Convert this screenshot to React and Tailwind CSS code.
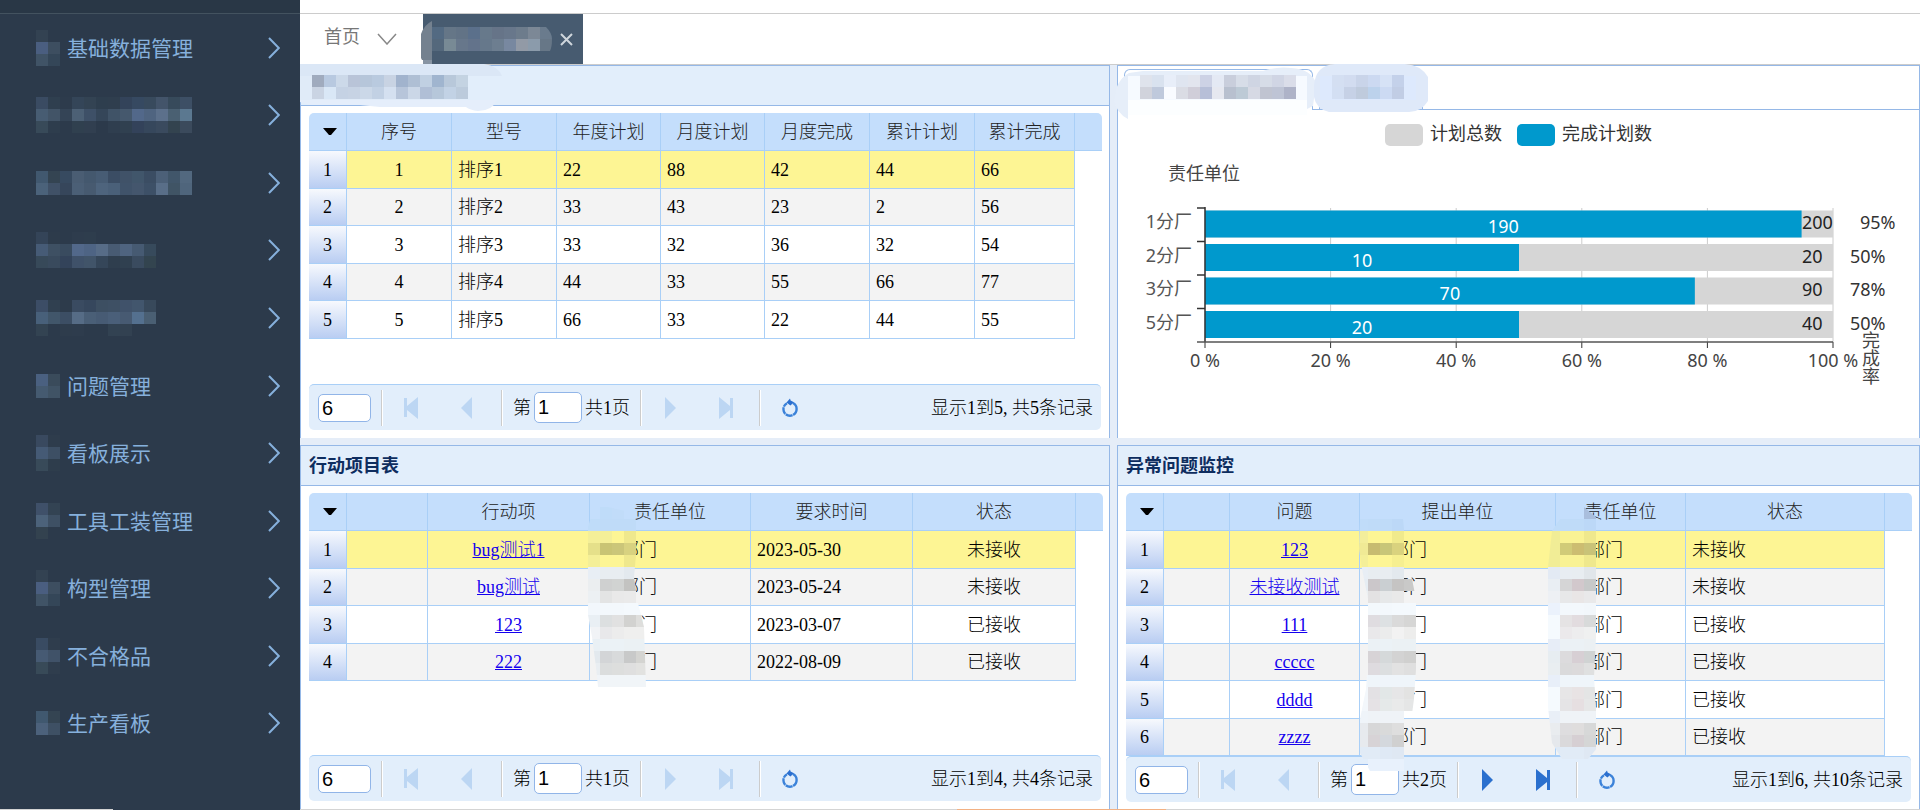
import { useState } from 'react';

const CELL = 12;

// Rows of hex colours separated by blanks, "-" leaves a cell empty
const Mosaic = ({ rows, className = '', clip, id }) => {
    const grid = rows.map((row) => row.split(' '));
    const width = Math.max(...grid.map((row) => row.length)) * CELL;
    const height = grid.length * CELL;

    return (
        <svg width={width} height={height} className={`shrink-0 ${className}`} shapeRendering="crispEdges" aria-hidden="true">
            {clip && (
                <clipPath id={id}>
                    <polygon points={clip} />
                </clipPath>
            )}
            <g clipPath={clip ? `url(#${id})` : undefined}>
                {grid.map((row, y) =>
                    row.map((color, x) =>
                        color === '-' ? null : (
                            <rect key={`${x}-${y}`} x={x * CELL} y={y * CELL} width={CELL} height={CELL} fill={`#${color}`} />
                        )
                    )
                )}
            </g>
        </svg>
    );
};

const menuItems = [
    { label: '基础数据管理', mosaic: ['334252 -', '4a5e80 3d4e60', '405366 344658'] },
    {
        name: '菜单二',
        mosaic: [
            '3a4b62 2f3f4f 2d3b4c 344558 334353 2e3e4e 2f3e4e 33435a 364961 384a5d 43546a 374a5b 3d4f65',
            '475c72 425467 344456 4c6075 3e5067 354659 405367 45586d 52688a 4f6480 5c708b 4a6072 5b7890',
            '384a59 2e3d4d - 30404f 313f50 - 2f3e4f 304050 33425a 36475c 3a4a5e 33434f 3b4a5c',
        ],
    },
    {
        name: '菜单三',
        mosaic: [
            '41586f 344452 374a60 4a5d73 44586e 475c74 3b4d64 405268 41566b 3b4d63 4c6078 41566a 52687f',
            '4b627a 405167 36465b 4b5f76 475a70 4e647d 4a6079 40536a 44566d 3d5067 596e88 405465 4f657c',
        ],
    },
    {
        name: '菜单四',
        mosaic: [
            '344458 2d3b4b - 2e3c4d 2e3d4d - - - - -',
            '465b76 3e5063 394b5f 52688a 4e6484 576c87 485b73 4f6480 465a72 374a5c',
            '374959 394a5d 33435a 3f5169 415469 354659 2f3e4e 304050 3a4b5f 33444f',
        ],
    },
    {
        name: '菜单五',
        mosaic: [
            '3c4d66 304050 2d3b4b 3a4b61 36475d 3d4f62 3e5064 40526a 42566d 38495b',
            '48607a 41566a 3c4e64 566c86 4a5f77 475b74 4a5f79 475a72 54708f 4a5f73',
            '334352 - 2e3c4c 2e3c4d - - 324252 324151 - -',
        ],
    },
    { label: '问题管理', mosaic: ['4a6080 3a4b5b', '455a70 405365'] },
    { label: '看板展示', mosaic: ['39495f 2e3c4c', '455a75 3d4f64', '384a59 2e3d4c'] },
    { label: '工具工装管理', mosaic: ['3f5069 334353', '4c627a 3e5064', '33424f -'] },
    { label: '构型管理', mosaic: ['334252 -', '4a5e80 3d4e60', '405366 344658'] },
    { label: '不合格品', mosaic: ['394b62 2f3d4d', '465a73 405268', '384a58 2f3d4d'] },
    { label: '生产看板', mosaic: ['40586f 344452', '4c617b 3e5064'] },
];

const Sidebar = () => (
    <aside className="w-[300px] shrink-0 flex flex-col bg-[#2c3a4b] text-[#86b0dc]">
        <div className="h-[14px] shrink-0 bg-[#293746] border-b border-[#43525f]"></div>
        <nav className="flex-1 flex flex-col pb-[52px] font-['Noto_Sans_CJK_SC',sans-serif]">
            {menuItems.map((item) => (
                <button
                    key={item.label || item.name}
                    type="button"
                    aria-label={item.name}
                    className="flex-1 min-h-0 flex items-center pl-9 pr-5 gap-[7px] text-[21px] text-left"
                >
                    <Mosaic rows={item.mosaic} />
                    <span className="flex-1">{item.label}</span>
                    <svg width="12" height="22" viewBox="0 0 12 22" fill="none" stroke="currentColor" strokeWidth="2">
                        <path d="M1 1 L10.8 11 L1 21" />
                    </svg>
                </button>
            ))}
        </nav>
    </aside>
);

const TabBar = () => (
    <div className="h-[51px] shrink-0 flex border-b border-[#cccccc]">
        <button type="button" className="w-[123px] flex items-center pb-2 pl-6 gap-[17px] text-lg text-[#777777] font-['Noto_Sans_CJK_SC',sans-serif] font-normal">
            首页
            <svg width="20" height="12" viewBox="0 0 20 12" fill="none" stroke="#888888" strokeWidth="1.5" className="mt-2">
                <path d="M1 1 L10 11 L19 1" />
            </svg>
        </button>
        <div className="relative w-40 flex items-center bg-[#475b70]">
            {/* Brush mark hanging over the tab's left edge */}
            <svg width="14" height="58" viewBox="0 0 14 58" className="absolute -left-[3px] top-0" aria-hidden="true">
                <path d="M12 7 Q4 11 1 20 V44 L2 46 H12 Z" fill="#74818f" />
                <path d="M3 46 H12 V58 H3 Z" fill="#8794a3" />
            </svg>
            <svg width="120" height="24" className="ml-[9px]" shapeRendering="crispEdges" aria-hidden="true">
                <clipPath id="tab-title">
                    <path d="M0 0 H114 Q120 6 120 12 Q120 20 118 24 H0 Z" />
                </clipPath>
                <g clipPath="url(#tab-title)">
                    {[
                        ['536a82', '657687', '627386', '5b708b', '67798b', '667488', '68778b', '6d7c8c', '7c8896', '6a7b8d'],
                        ['54687c', '788a95', '67778b', '63738b', '66788b', '6d7e90', '7888a0', '929aa6', '8b9bab', '677787'],
                    ].map((row, y) => row.map((c, x) => <rect key={`${x}-${y}`} x={x * 12} y={y * 12} width="12" height="12" fill={`#${c}`} />))}
                </g>
            </svg>
            <button type="button" aria-label="关闭" className="ml-2 mt-px">
                <svg width="13" height="13" viewBox="0 0 13 13" stroke="#cfd6dc" strokeWidth="2">
                    <path d="M1 1 L12 12 M12 1 L1 12" />
                </svg>
            </button>
        </div>
    </div>
);

const PageIcon = ({ type }) => (
    <svg width="18" height="22" viewBox="0 0 18 22" fill="currentColor">
        {type === 'first' && <path d="M2 1 H5 V9 L16 0 V22 L5 13 V20 H2 Z" />}
        {type === 'prev' && <path d="M14 0 V22 L3 11 Z" />}
        {type === 'next' && <path d="M4 0 V22 L15 11 Z" />}
        {type === 'last' && <path d="M2 0 L13 9 V1 H16 V21 H13 V13 L2 22 Z" />}
    </svg>
);

const RefreshIcon = () => (
    <svg width="18" height="20" viewBox="0 0 18 20" fill="none" stroke="#3b82d9" strokeWidth="2.4">
        <path d="M12 5 A6.6 6.6 0 0 1 15.6 11" />
        <path d="M15.6 11 A6.6 6.6 0 1 1 6 5.2" strokeDasharray="7 0.6" />
        <path d="M5.5 4.6 L9 0.6 L9.6 2.6 L13 4.2 L9.4 7.6 Z" fill="#2b6fcf" stroke="none" />
    </svg>
);

const Separator = () => <div className="w-[2px] h-9 border-l border-r border-l-[#cccccc] border-r-white"></div>;

const PageButton = ({ type, label, active }) => (
    <button
        type="button"
        aria-label={label}
        disabled={!active}
        className={`w-14 flex justify-center ${active ? 'text-[#2b70ce]' : 'text-[#bcd6f3]'}`}
    >
        <PageIcon type={type} />
    </button>
);

const Pager = ({ pages, summary, hasNext }) => {
    const [size, setSize] = useState('6');
    const [page, setPage] = useState('1');

    return (
        <div className="mt-auto h-[46px] shrink-0 flex items-center pl-[9px] pr-2 rounded-[5px] bg-[#e2eefb] border-t border-[#a9cff7]">
            <input
                aria-label="每页条数"
                value={size}
                onChange={(e) => setSize(e.target.value)}
                className="w-[53px] h-7 mr-[10px] pl-[3px] bg-white border border-[#91b5e8] rounded-[5px] text-xl font-['Liberation_Sans',sans-serif]"
            />
            <Separator />
            <PageButton type="first" label="首页" />
            <PageButton type="prev" label="上一页" />
            <div className="w-[6px]"></div>
            <Separator />
            <label className="flex items-center ml-[10px] mr-[10px] gap-[3px]">
                第
                <input
                    value={page}
                    onChange={(e) => setPage(e.target.value)}
                    className="w-12 h-[31px] pl-[3px] bg-white border border-[#91b5e8] rounded-[5px] text-xl font-['Liberation_Sans',sans-serif]"
                />
                共{pages}页
            </label>
            <Separator />
            <PageButton type="next" label="下一页" active={hasNext} />
            <PageButton type="last" label="末页" active={hasNext} />
            <div className="w-[5px]"></div>
            <Separator />
            <button type="button" aria-label="刷新" className="ml-5">
                <RefreshIcon />
            </button>
            <span className="ml-auto whitespace-pre">{summary}</span>
        </div>
    );
};

const DataGrid = ({ columns, rows }) => (
    <table className="w-full table-fixed border-separate border-spacing-0">
        <colgroup>
            <col style={{ width: 38 }} />
            {columns.map((col) => (
                <col key={col.key} style={{ width: col.width }} />
            ))}
            <col style={{ width: 27 }} />
        </colgroup>
        <thead>
            <tr className="h-[38px]">
                <th className="py-0 pr-0 pl-1 bg-[#c4defc] border-b border-r border-[#a9cff7] rounded-tl-[5px]">
                    <svg width="14" height="8" viewBox="0 0 14 8" className="mx-auto" role="img" aria-label="菜单">
                        <path d="M0 0 H14 L8 7 H6 Z" fill="#000" />
                    </svg>
                </th>
                {columns.map((col) => (
                    <th key={col.key} className="p-0 font-light text-[#222222] bg-[#c4defc] border-b border-r border-[#a9cff7]">
                        {col.title}
                    </th>
                ))}
                <th className="bg-[#c4defc] border-b border-[#a9cff7] rounded-tr-[5px]"></th>
            </tr>
        </thead>
        <tbody>
            {rows.map((row, i) => (
                <tr key={i} className={`odd:h-[38px] even:h-[37px] ${i === 0 ? 'bg-[#fdf594]' : 'odd:bg-white even:bg-[#f3f3f3]'}`}>
                    <td className="p-0 text-center bg-linear-to-b from-[#f7f9fd] to-[#b9cdf2] border-b border-r border-[#a9cff7]">{i + 1}</td>
                    {columns.map((col) => (
                        <td
                            key={col.key}
                            className={`p-0 border-b border-r border-[#a9cff7] ${col.center ? 'text-center' : col.masked ? 'pl-[31px]' : 'pl-[6px]'}`}
                        >
                            {col.link ? (
                                <a href="#" className="text-[#1400ee] underline">
                                    {row[col.key]}
                                </a>
                            ) : (
                                row[col.key]
                            )}
                        </td>
                    ))}
                    <td className="bg-white"></td>
                </tr>
            ))}
        </tbody>
    </table>
);

const Panel = ({ header, children }) => (
    <section className="relative min-w-0 min-h-0 flex flex-col bg-white border-l border-r border-[#95b8e7]">
        <h2 className="h-[41px] shrink-0 flex items-center pl-2 bg-[#e2eefb] border-t border-b border-[#95b8e7] text-lg font-bold text-[#0e2d5f]">
            {header}
        </h2>
        <div className="relative flex-1 min-h-0 flex flex-col px-2 pt-[7px] pb-2">{children}</div>
    </section>
);

const planColumns = [
    { key: 'no', title: '序号', width: 105, center: true },
    { key: 'model', title: '型号', width: 105 },
    { key: 'year', title: '年度计划', width: 104 },
    { key: 'month', title: '月度计划', width: 104 },
    { key: 'monthDone', title: '月度完成', width: 105 },
    { key: 'total', title: '累计计划', width: 105 },
    { key: 'totalDone', title: '累计完成', width: 100 },
];

const planRows = [
    { no: 1, model: '排序1', year: 22, month: 88, monthDone: 42, total: 44, totalDone: 66 },
    { no: 2, model: '排序2', year: 33, month: 43, monthDone: 23, total: 2, totalDone: 56 },
    { no: 3, model: '排序3', year: 33, month: 32, monthDone: 36, total: 32, totalDone: 54 },
    { no: 4, model: '排序4', year: 44, month: 33, monthDone: 55, total: 66, totalDone: 77 },
    { no: 5, model: '排序5', year: 66, month: 33, monthDone: 22, total: 44, totalDone: 55 },
];

const actionColumns = [
    { key: 'blank', title: '', width: 81 },
    { key: 'name', title: '行动项', width: 162, center: true, link: true },
    { key: 'dept', title: '责任单位', width: 161, masked: true },
    { key: 'date', title: '要求时间', width: 162 },
    { key: 'status', title: '状态', width: 163, center: true },
];

const actionRows = [
    { name: 'bug测试1', dept: '部门', date: '2023-05-30', status: '未接收' },
    { name: 'bug测试', dept: '部门', date: '2023-05-24', status: '未接收' },
    { name: '123', dept: '部门', date: '2023-03-07', status: '已接收' },
    { name: '222', dept: '部门', date: '2022-08-09', status: '已接收' },
];

const issueColumns = [
    { key: 'blank', title: '', width: 66 },
    { key: 'name', title: '问题', width: 130, center: true, link: true },
    { key: 'from', title: '提出单位', width: 196, masked: true },
    { key: 'dept', title: '责任单位', width: 130, masked: true },
    { key: 'status', title: '状态', width: 199 },
];

const issueRows = [
    { name: '123', from: '部门', dept: '部门', status: '未接收' },
    { name: '未接收测试', from: '部门', dept: '部门', status: '未接收' },
    { name: '111', from: '部门', dept: '部门', status: '已接收' },
    { name: 'ccccc', from: '部门', dept: '部门', status: '已接收' },
    { name: 'dddd', from: '部门', dept: '部门', status: '已接收' },
    { name: 'zzzz', from: '部门', dept: '部门', status: '已接收' },
];

const actionMask = [
    '- bfdcf9 c1dcf9 - -',
    'bfdcf9 bfdbf8 bfdbf8 bfdbf8 -',
    'f4ef98 f4ef98 fdf594 efe88d -',
    'e5e08a c9c474 cbc679 d8d280 -',
    'f4ef98 fdf594 fdf594 efe88d -',
    'e8eef5 e8edf1 e8edf1 e3e9ee -',
    'ebeef0 cfd0d0 d1d3d2 c3c3c1 -',
    'ecf0f3 e3e4e4 e9e9e9 eaeaea -',
    'f2f7fc f3f8fc f3f8fc f4f9fd f4f9fd',
    'e9eff4 dcdfe0 e1e1e1 d2d2d0 dededc',
    'f1f3f6 e8e8ea ececec efefee efefee',
    'e9f0f5 ebf2f6 ebf2f6 ebf1f4 ebf1f4',
    'e3e9ee d3d5d7 d8dadb c8c9c9 d4d4d1',
    'e9eef2 dbdddd dddedd dfdfdf e2e2e0',
    'f0f4f8 f1f5f8 f1f5f8 f1f5f8 f1f5f8',
];

const fromMask = [
    'c0dcf9 bfdbf8 bfdbf8 bcd8f7 -',
    'f3ee9b fdf594 fdf594 f0ea8c -',
    'f0ea95 c7bb70 c8c678 d9d27e -',
    'f4ef98 fdf594 fdf594 f6ef90 -',
    'e8eef5 e8edf1 e8edf1 e3e9ee -',
    'e6edf3 cbc7ca cacfd2 c5c4c3 c9c9c8',
    'ebeff2 e3e2e3 e6e8e9 e9e9e9 -',
    '- f3f8fc f3f8fc f4f9fd f4f9fd',
    '- dfdce0 dde1e3 dadada d6d6d5',
    '- e9e8ea ebecec f2f2f2 ededec',
    '- ebf1f5 ebf2f6 ebf1f4 ebf1f4',
    '- d7d3d6 d5d9da d3d3d3 d0d0cf',
    '- dedbdf dcdfe0 e2e2e2 dfdfdf',
    'f1f6fb eff5fa eff5fa eff5fa eff5fa',
    'f3f7fb e3e1e4 e2e7e7 e6e6e7 e3e3e2',
    'f3f7fb e5e2e5 e5e9e9 e9eaea e5e6e6',
    'eff4f9 eff3f7 eff3f7 eff3f7 -',
    'e7eaee d7d7d8 d9dada dedede -',
    'e7eaee d7d3d6 d4d8dd d0d0d0 -',
    'e1ebf6 e1ebf6 dfe9f5 dfe8f3 -',
    '- e8f1fc e8f1fc e8f1fc -',
];

const deptMask = [
    '- - - a9bedd -',
    'bfdcf9 bfdbf8 bfdbf8 bcd8f7 -',
    'f1ed96 f9f294 f9f294 efe88d -',
    'f1ed96 d1cb78 ccbd71 c9c378 -',
    'f1ed96 f9f294 f9f294 efe88d -',
    'e3eaf4 e8edf2 e8edf1 e1e6ea -',
    'e9eef3 d5d5d6 d2c8cc c7c9c9 -',
    'edf0f4 e7e8e9 e9e6e6 e9e9ea -',
    'ebf2fc f3f8fc f3f8fc f2f7fb -',
    'f5fafe e5e3e4 e2dcdf d8dada -',
    'f5fafe ebe9eb ededee eff0f0 -',
    'e7edf7 ebf1f5 ebf1f5 ebf0f3 -',
    'e7edf1 dcdbdd d7cfd4 d0d3d3 -',
    'e9eef1 dadadb dcdadb dfe0e0 -',
    'e8eff9 eff5fa eff5fa eff5fa -',
    'f5fafe e7e6e7 e8e3e4 e4e5e5 -',
    'f5fafe e5e4e6 e6dfe1 e6e7e7 -',
    'e9eff7 eff3f7 eff3f7 eff3f7 -',
    'e9ecef dedddf dfdddd d7d8d8 -',
    'e5e8ec dad9db d6cfd3 d5d6d6 -',
    'dfeaf6 e1ebf6 e1ebf6 dfe8f3 -',
];

const AXIS_X = 87;
const AXIS_W = 628;
const AXIS_TOP = 98;
const BAND = 33.5;

const plan = [
    { name: '1分厂', done: 190, total: 200, rate: 95, rateX: 742 },
    { name: '2分厂', done: 10, total: 20, rate: 50, rateX: 732 },
    { name: '3分厂', done: 70, total: 90, rate: 78, rateX: 732 },
    { name: '5分厂', done: 20, total: 40, rate: 50, rateX: 732 },
];

const PlanChart = () => {
    const bottom = AXIS_TOP + BAND * plan.length;

    return (
        <svg viewBox="0 0 801 328" className="w-full font-['Noto_Sans','Noto_Sans_CJK_SC',sans-serif] text-lg font-normal" role="img" aria-label="计划完成率">
            {/* Legend */}
            <rect x="267" y="14" width="38" height="22" rx="5" fill="#d6d6d6" />
            <text x="312" y="30" fill="#333333">计划总数</text>
            <rect x="399" y="14" width="38" height="22" rx="5" fill="#0099cd" />
            <text x="444" y="30" fill="#333333">完成计划数</text>
            <text x="50" y="70" fill="#444444">责任单位</text>

            {/* Split lines and value axis */}
            {[0, 20, 40, 60, 80, 100].map((v) => {
                const x = AXIS_X + (AXIS_W * v) / 100;
                return (
                    <g key={v}>
                        <line x1={x} x2={x} y1={AXIS_TOP} y2={bottom} stroke="#cccccc" />
                        <line x1={x} x2={x} y1={bottom} y2={bottom + 6} stroke="#333333" />
                        <text x={x} y="257" textAnchor="middle" fill="#444444">{v} %</text>
                    </g>
                );
            })}

            {plan.map((item, i) => {
                const top = AXIS_TOP + BAND * i;
                const doneW = (AXIS_W * item.rate) / 100;
                return (
                    <g key={item.name}>
                        <rect x={AXIS_X} y={top + 2.5} width={AXIS_W} height="27" fill="#d6d6d6" />
                        <rect x={AXIS_X} y={top + 2.5} width={doneW} height="27" fill="#0099cd" />
                        <line x1={AXIS_X - 8} x2={AXIS_X} y1={top} y2={top} stroke="#333333" strokeWidth="1.5" />
                        <text x={AXIS_X - 13} y={top + 20} textAnchor="end" fill="#555555">{item.name}</text>
                        <text x={AXIS_X + doneW / 2} y={top + 25} textAnchor="middle" fill="#ffffff">{item.done}</text>
                        <text x="684" y={top + 21} fill="#222222">{item.total}</text>
                        <text x={item.rateX} y={top + 21} fill="#333333">{item.rate}%</text>
                    </g>
                );
            })}

            <line x1={AXIS_X} x2={AXIS_X} y1={AXIS_TOP - 1} y2={bottom} stroke="#333333" strokeWidth="1.5" />
            <line x1={AXIS_X - 8} x2={AXIS_X + AXIS_W} y1={bottom} y2={bottom} stroke="#555555" strokeWidth="1.5" />
            <text x="752" y="221" fill="#444444" className="[writing-mode:vertical-rl]">完成率</text>
        </svg>
    );
};

const ChartPanel = () => (
    <section className="relative min-w-0 min-h-0 flex flex-col bg-white border-l border-r border-t border-[#95b8e7]">
        <div className="h-11 shrink-0 flex items-end pl-[6px] gap-[6px] border-b border-[#95b8e7]" role="tablist">
            <button type="button" role="tab" aria-selected="true" aria-label="计划" className="w-[189px] h-[41px] -mb-px bg-white border border-b-0 border-[#95b8e7] rounded-t-[6px]"></button>
            <button type="button" role="tab" aria-selected="false" aria-label="统计" className="w-[104px] h-10 bg-[#dfeafb] border border-b-0 border-[#95b8e7] rounded-t-[6px]"></button>
        </div>
        {/* Masked tab titles */}
        <svg width="316" height="58" className="absolute -left-[5px] -top-[3px] pointer-events-none" aria-hidden="true">
            <path d="M2 36 Q2 18 16 10 L30 8 L150 8 Q165 3 178 5 Q198 6 203 20 L200 43 L194 46 H15 V56 Q3 50 1 36 Z" fill="#e6eef9" />
            <path d="M15 13 H194 V49 H15 Z" fill="#f6faff" />
            <path d="M15 37 H194 V52 H15 Z" fill="#fcfeff" />
            <path d="M201 22 Q203 2 222 1 H292 Q308 2 315 14 V38 Q308 49 296 49 H216 Q203 46 201 34 Z" fill="#dfe9f9" />
            <path d="M207 13 H303 V37 H207 Z" fill="#dde9fd" />
        </svg>
        <Mosaic
            className="absolute left-[22px] top-[9px] pointer-events-none"
            rows={[
                'dfe3ec d9e2ef e8eef9 dfe5f0 e2e5ee cdd2e5 e4e9f4 c9cedc d7dde8 cfd5e3 d6dce7 d0d5e4 dadde9',
                'd1d3dc bfc9dc f9fbff dadce4 d0ced9 b7bfd8 e6e8f0 b8c0cf bdcad6 d6d9e4 c0c4d1 bec4d5 aeb3c8',
            ]}
        />
        <Mosaic
            className="absolute left-[214px] top-[9px] pointer-events-none"
            rows={['d4dff2 d2dcf0 c9d4e9 ccd9f1 d6e2f6 c4d1ea', 'd3dff3 c6d1e6 bfcbdd bcd2ec ccdaf3 c1cde5']}
        />
        <PlanChart />
    </section>
);

const App = () => {
    return (
        <div className="h-screen flex flex-col overflow-hidden bg-white text-black">
            <div className="flex-1 min-h-0 flex">
                <Sidebar />
                <main className="flex-1 min-w-0 flex flex-col text-lg leading-6 font-light font-['Liberation_Serif','Noto_Sans_CJK_SC',serif]">
                    <div className="h-[14px] shrink-0 border-b border-[#cccccc]"></div>
                    <TabBar />
                    <div className="flex-1 min-h-0 grid grid-cols-[810fr_803fr] grid-rows-[373fr_364fr] gap-[7px] bg-[#e5edf8]">
                        <Panel header="">
                            {/* Masked panel title */}
                            <svg width="202" height="49" className="absolute -left-px -top-[44px]" aria-hidden="true">
                                <path d="M0 2 H184 Q198 4 202 14 H0 Z" fill="#dbe7f6" />
                                <path d="M0 14 H160 V38 H0 Z" fill="#e0ebf8" />
                                <path d="M0 38 H197 Q192 49 178 49 Q170 48 166 45 H80 L60 43 H10 L0 40 Z" fill="#e5eefb" />
                            </svg>
                            <Mosaic
                                className="absolute left-[11px] -top-[31px]"
                                rows={[
                                    'a0abbe b8c9e0 ccd9e9 b9c4d8 b6c6da b9cadf c8d3e3 a1b3cd afbfd4 c0d0e2 a0b5cf b8c8da c4d3e2',
                                    'cad4e3 d9e7f6 c5d2e4 c7d3e4 cbd8e8 c2d1e4 d4e0f0 b7c5da cbd7e7 b0bfd6 b6c7da c2d2e5 bccbdc',
                                ]}
                            />
                            <DataGrid columns={planColumns} rows={planRows} />
                            <Pager pages={1} summary="显示1到5, 共5条记录" />
                        </Panel>
                        <ChartPanel />
                        <Panel header="行动项目表">
                            <DataGrid columns={actionColumns} rows={actionRows} />
                            <Pager pages={1} summary="显示1到4, 共4条记录" />
                            <Mosaic
                                id="action-mask"
                                clip="6,0 20,0 46,6 50,24 48,48 46,70 50,96 56,120 58,180 10,180 8,160 4,130 0,108 0,20"
                                className="absolute left-[287px] top-[21px] pointer-events-none"
                                rows={actionMask}
                            />
                        </Panel>
                        <Panel header="异常问题监控">
                            <DataGrid columns={issueColumns} rows={issueRows} />
                            <Pager pages={2} summary="显示1到6, 共10条记录" hasNext />
                            <Mosaic
                                id="from-mask"
                                clip="4,0 47,0 50,30 56,60 60,80 60,150 58,180 54,210 52,252 14,252 4,234 4,200 10,170 12,140 12,80 6,50 3,30"
                                className="absolute left-[238px] top-[33px] pointer-events-none"
                                rows={fromMask}
                            />
                            <Mosaic
                                id="dept-mask"
                                clip="36,0 48,10 52,22 50,50 48,80 48,130 46,170 48,200 52,220 50,240 40,252 14,252 4,236 0,200 0,60 4,24 12,12 34,12"
                                className="absolute left-[430px] top-[21px] pointer-events-none"
                                rows={deptMask}
                            />
                        </Panel>
                    </div>
                </main>
            </div>
            <div className="h-px shrink-0 flex bg-[#d4d4d4]">
                <div className="flex-[113]"></div>
                <div className="flex-[187] bg-[#2c3a4b]"></div>
                <div className="flex-[657]"></div>
                <div className="flex-[209] bg-[#f3b183]"></div>
                <div className="flex-[754]"></div>
            </div>
        </div>
    );
};

export default App;
